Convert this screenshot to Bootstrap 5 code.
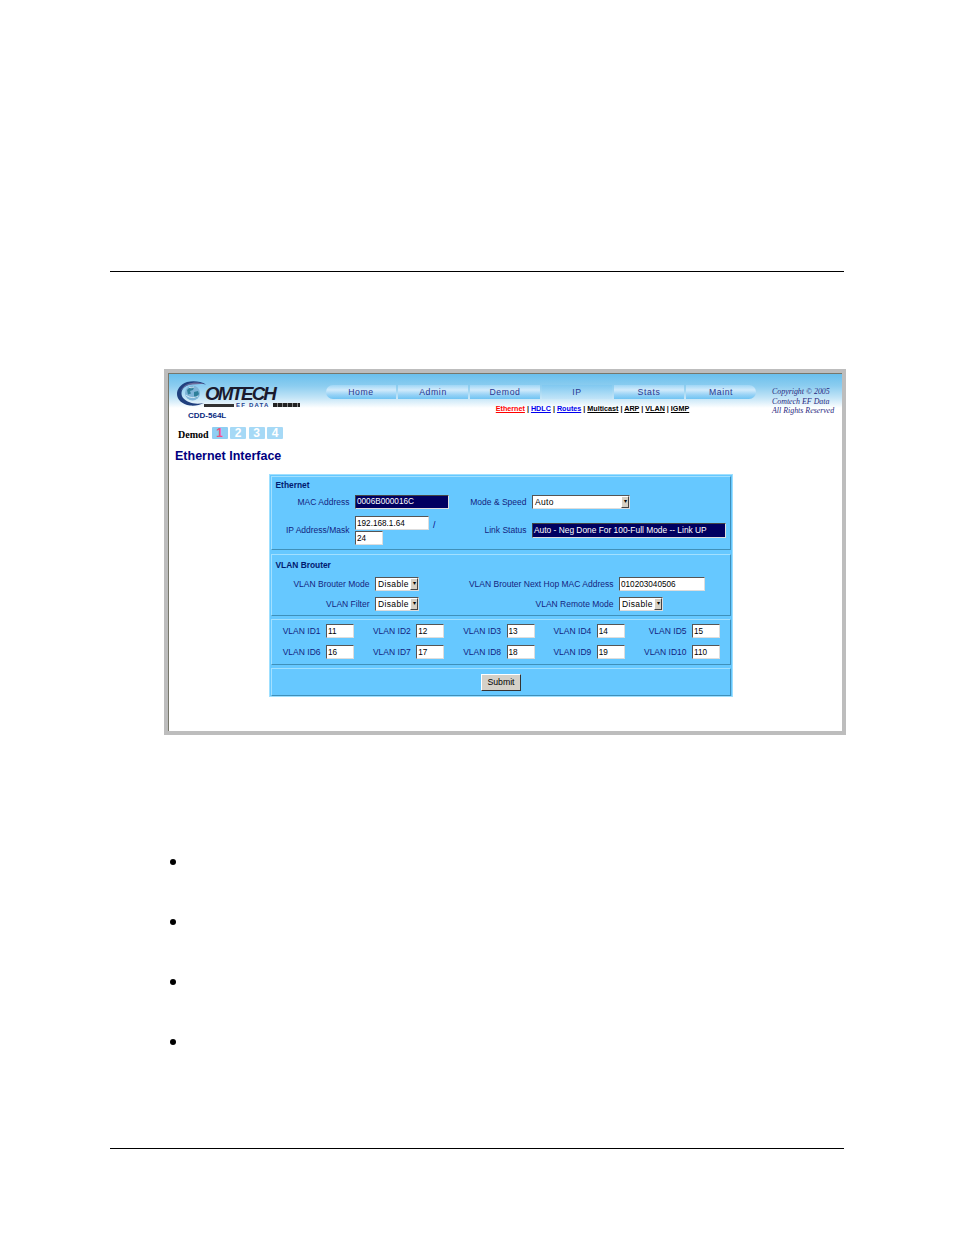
<!DOCTYPE html>
<html lang="en">
<head>
<meta charset="utf-8">
<title>Ethernet Interface</title>
<link rel="stylesheet" href="https://cdn.jsdelivr.net/npm/bootstrap@5.3.0/dist/css/bootstrap.min.css">
<style>
body{background:#fff;font-family:"Liberation Sans",Arial,sans-serif;margin:0}
.doc-page{height:1235px;padding:271px 110px 0}
.rule-line{height:1px;background:#000}
.shot{margin:97px 0 0 54px;width:682px;height:366px;border:4px solid #bdbdbd;background:#fff;color:#000080;font-size:8.7px;line-height:1}
.shot-in{height:358px;border-top:1px solid #77776b;border-left:1px solid #77776b;background:linear-gradient(#6abfec 0,#8ccdf0 12px,#c4e5f7 24px,#fff 34px,#fff 100%)}
.hd{height:53px}
.logo-col{width:156px;padding:7px 0 0 8px}
.logo-top{height:26px}
.globe{width:29px;height:26px;flex:none}
.logo-word{font:italic 700 18.800px/13px "Liberation Sans",sans-serif;letter-spacing:-1.9px;color:#1a1a2e;margin:6px 0 0 -1px;height:13px}
.logo-sub{margin:-5px 0 0 27px;height:6px;font:700 6px/6px "Liberation Sans",sans-serif;letter-spacing:1.2px;color:#1d3f8f}
.logo-bar{width:30px;height:3px;background:#333;margin-right:2px}
.logo-blk{width:27px;height:4px;margin-left:3px;background:repeating-linear-gradient(90deg,#222 0 4px,#888 4px 5px)}
.model{margin:4px 0 0 11px;font-weight:700;font-size:8px;color:#0a2a80}
.tab-col{width:430px;margin-left:1px;padding-top:11px}
.tabs{height:14px;gap:2px}
.tb{width:70px;height:14px;text-align:center;line-height:14px;color:#2a3690;letter-spacing:.6px;background:linear-gradient(#9fd6f6,#d2ebfb 35%,#97d2f6 70%,#70c4f3)}
.tb-first{border-radius:7px 0 0 7px}
.tb-last{border-radius:0 7px 7px 0}
.tb-on{background:linear-gradient(#80c8f0,#a8daf5 60%,#c2e4f8)}
.sublinks{margin-top:6px;font-weight:700;font-size:7.2px;text-align:center;color:#111;padding-left:103px}
.sublinks a{color:#0000ee}
.sublinks a.cur{color:#f00}
.sublinks a.blk{color:#000}
.copy{width:70px;margin-left:16px;padding-top:13px;font:italic 7.9px/9.5px "Liberation Serif",serif;color:#2a2a80;white-space:nowrap}
.demod-row{margin:0 0 0 9px;height:14px}
.demod-lbl{font:700 10px/1 "Liberation Serif",serif;color:#000;margin-right:3px;padding-top:3px}
.num{width:16px;height:12px;margin-right:2.500px;background:#a6d9f6;color:#fff;font:700 12px/12px "Liberation Sans",sans-serif;text-align:center;border-radius:1px}
.num-on{color:#f0507f;background:#8fcef3}
.pg-title{margin:8px 0 0 6px;font-weight:700;font-size:12.500px;line-height:15px;color:#000080}
.panel{margin:10px 0 0 100px;width:464px;height:223px;background:#66c8ff;border:1px solid #9fe0ff;padding:1px}
.sect{border:1px solid;border-color:#a2e0ff #3f90ba #3f90ba #a2e0ff;margin-bottom:3px}
.s1{height:74px;margin-bottom:4px}
.s2{height:62px}
.s3{height:46px}
.s4{height:28px;margin-bottom:0}
.sect-h{font-weight:700;font-size:8.400px;color:#001a70;padding:4px 0 0 3.500px;line-height:9px}
.s2 .sect-h{padding-top:6px}
.lb{text-align:right;flex:none;font-size:8.500px;padding-right:5.500px;color:#141f80;white-space:nowrap}
.fld{display:block;flex:none;height:14px;padding:0 1px;font:8.2px/12px "Liberation Sans",sans-serif;color:#000;background:#fff;border:1px solid;border-color:#555 #ddd #ddd #555;border-radius:0;outline:0}
.fld-dark{background:#000060;color:#fff;border-color:#444 #ddd #ddd #444;white-space:nowrap}
.pick{display:flex;align-items:center;justify-content:space-between;padding:0 0 0 2px;font-size:8.5px;letter-spacing:.35px}
.pick-btn{width:8px;height:12px;background:#d6d0c4;border:1px solid;border-color:#fff #444 #444 #fff;color:#000;font-size:6px;line-height:9px;text-align:center;flex:none;letter-spacing:0}
.w-mac{width:94px}.w-ip{width:74px}.w-mask{width:28px}.w-mode{width:98px}.w-link{width:194px;font-size:8.4px;height:15px}.w-dis{width:44px}.w-hop{width:86px}.w-id{width:28px}
.l1{width:83px}.l2{width:83px}.l3{width:103px}.l4{width:200px}.l5{width:83px}
.r-mac{margin-top:5px;height:14px}
.r-ip{margin-top:7px;height:30px}
.r-ip .lb{padding-top:10px}
.ip-stack{gap:1px}
.slash{width:20px;flex:none;padding:5px 0 0 4px}
.r-ls{padding-top:7px}
.v1{margin-top:7px;height:14px}
.v2{margin-top:6px;height:14px}
.id-row{height:14px;padding-left:7px}
.id-a{margin-top:4px}
.id-b{margin-top:7px}
.id-cell{width:90.250px}
.id-cell .lb{width:47px}
.id-cell:last-child{width:auto}
.id-cell:last-child .lb{width:52px}
.submit-btn{width:40px;height:17px;margin-top:5px;padding:0;font:8.7px/15px "Liberation Sans",sans-serif;background:#d4d0c8;color:#000;border:1px solid;border-color:#fff #333 #333 #fff;border-radius:0}
.bullets{margin:0 0 0 60px;padding-top:123.500px;gap:54.300px}
.blt{display:block;width:6px;height:6px;background:#000}
.foot-rule{margin-top:102.600px}
</style>
</head>
<body>
<main class="doc-page">
  <div class="rule-line"></div>
  <section class="shot">
    <div class="shot-in">
      <header class="hd d-flex">
        <div class="logo-col">
          <div class="logo-top d-flex">
            <svg class="globe" viewBox="0 0 29 26" aria-hidden="true">
              <path d="M29 3.500C24 .5 17-.5 10 1 3 3.500 0 8.500 0 13c0 5.500 5 10.500 13 11.500 5 .5 10-.5 14-2.500-5 1-11 1-15-1-5-2-7.500-5-7.500-8.500 0-4 3-7.500 8-9 5-1.500 11-1.500 16.500 0z" fill="#1f3f7e"/>
              <path d="M27 3C22 1 16 1 11 3 6 5 3 9 3.500 13 3 9 7 5 12 4c5-1 10-1 15-1z" fill="#6a6a9a"/>
              <circle cx="15.500" cy="12" r="7.500" fill="#7fb4d8"/>
              <path d="M10 9c2-2.500 5-3 7-2.500l-1 2.500-3 1 1 2.500-3 1zM17 11l4-1 1 3-3 4-2-2z" fill="#2f7f9a"/>
              <path d="M12 6c1 1 3 1 5 0M9 14c2 2 7 4 12 1" stroke="#e8f4fb" stroke-width=".8" fill="none"/>
            </svg>
            <div class="logo-word">OMTECH</div>
          </div>
          <div class="logo-sub d-flex align-items-center">
            <span class="logo-bar"></span><span>EF DATA</span><span class="logo-blk"></span>
          </div>
          <div class="model">CDD-564L</div>
        </div>
        <div class="tab-col">
          <nav class="tabs d-flex">
            <div class="tb tb-first">Home</div>
            <div class="tb">Admin</div>
            <div class="tb">Demod</div>
            <div class="tb tb-on">IP</div>
            <div class="tb">Stats</div>
            <div class="tb tb-last">Maint</div>
          </nav>
          <div class="sublinks"><a class="cur" href="#">Ethernet</a> | <a href="#">HDLC</a> | <a href="#">Routes</a> | <a class="blk" href="#">Multicast</a> | <a class="blk" href="#">ARP</a> | <a class="blk" href="#">VLAN</a> | <a class="blk" href="#">IGMP</a></div>
        </div>
        <div class="copy">Copyright © 2005<br>Comtech EF Data<br>All Rights Reserved</div>
      </header>
      <div class="demod-row d-flex">
        <span class="demod-lbl">Demod</span>
        <span class="num num-on">1</span><span class="num">2</span><span class="num">3</span><span class="num">4</span>
      </div>
      <h1 class="pg-title">Ethernet Interface</h1>
      <form class="panel">
        <div class="sect s1">
          <div class="sect-h">Ethernet</div>
          <div class="r-mac d-flex align-items-center">
            <span class="lb l1">MAC Address</span>
            <div class="fld fld-dark w-mac">0006B000016C</div>
            <span class="lb l2">Mode &amp; Speed</span>
            <div class="fld pick w-mode"><span>Auto</span><span class="pick-btn">▾</span></div>
          </div>
          <div class="r-ip d-flex">
            <span class="lb l1">IP Address/Mask</span>
            <div class="ip-stack d-flex flex-column">
              <input class="fld w-ip" value="192.168.1.64" aria-label="IP Address">
              <input class="fld w-mask" value="24" aria-label="Mask">
            </div>
            <span class="slash">/</span>
            <span class="lb l5">Link Status</span>
            <div class="r-ls"><div class="fld fld-dark w-link">Auto - Neg Done For 100-Full Mode -- Link UP</div></div>
          </div>
        </div>
        <div class="sect s2">
          <div class="sect-h">VLAN Brouter</div>
          <div class="v1 d-flex align-items-center">
            <span class="lb l3">VLAN Brouter Mode</span>
            <div class="fld pick w-dis"><span>Disable</span><span class="pick-btn">▾</span></div>
            <span class="lb l4">VLAN Brouter Next Hop MAC Address</span>
            <input class="fld w-hop" value="010203040506" aria-label="Next Hop MAC Address">
          </div>
          <div class="v2 d-flex align-items-center">
            <span class="lb l3">VLAN Filter</span>
            <div class="fld pick w-dis"><span>Disable</span><span class="pick-btn">▾</span></div>
            <span class="lb l4">VLAN Remote Mode</span>
            <div class="fld pick w-dis"><span>Disable</span><span class="pick-btn">▾</span></div>
          </div>
        </div>
        <div class="sect s3">
          <div class="id-row id-a d-flex">
            <div class="id-cell d-flex align-items-center"><span class="lb">VLAN ID1</span><input class="fld w-id" value="11" aria-label="VLAN ID1"></div>
            <div class="id-cell d-flex align-items-center"><span class="lb">VLAN ID2</span><input class="fld w-id" value="12" aria-label="VLAN ID2"></div>
            <div class="id-cell d-flex align-items-center"><span class="lb">VLAN ID3</span><input class="fld w-id" value="13" aria-label="VLAN ID3"></div>
            <div class="id-cell d-flex align-items-center"><span class="lb">VLAN ID4</span><input class="fld w-id" value="14" aria-label="VLAN ID4"></div>
            <div class="id-cell d-flex align-items-center"><span class="lb">VLAN ID5</span><input class="fld w-id" value="15" aria-label="VLAN ID5"></div>
          </div>
          <div class="id-row id-b d-flex">
            <div class="id-cell d-flex align-items-center"><span class="lb">VLAN ID6</span><input class="fld w-id" value="16" aria-label="VLAN ID6"></div>
            <div class="id-cell d-flex align-items-center"><span class="lb">VLAN ID7</span><input class="fld w-id" value="17" aria-label="VLAN ID7"></div>
            <div class="id-cell d-flex align-items-center"><span class="lb">VLAN ID8</span><input class="fld w-id" value="18" aria-label="VLAN ID8"></div>
            <div class="id-cell d-flex align-items-center"><span class="lb">VLAN ID9</span><input class="fld w-id" value="19" aria-label="VLAN ID9"></div>
            <div class="id-cell d-flex align-items-center"><span class="lb">VLAN ID10</span><input class="fld w-id" value="110" aria-label="VLAN ID10"></div>
          </div>
        </div>
        <div class="sect s4 d-flex justify-content-center">
          <button type="button" class="submit-btn">Submit</button>
        </div>
      </form>
    </div>
  </section>
  <div class="bullets d-flex flex-column">
    <span class="blt rounded-circle"></span>
    <span class="blt rounded-circle"></span>
    <span class="blt rounded-circle"></span>
    <span class="blt rounded-circle"></span>
  </div>
  <div class="rule-line foot-rule"></div>
</main>
<script src="https://cdn.jsdelivr.net/npm/bootstrap@5.3.0/dist/js/bootstrap.bundle.min.js"></script>
</body>
</html>
